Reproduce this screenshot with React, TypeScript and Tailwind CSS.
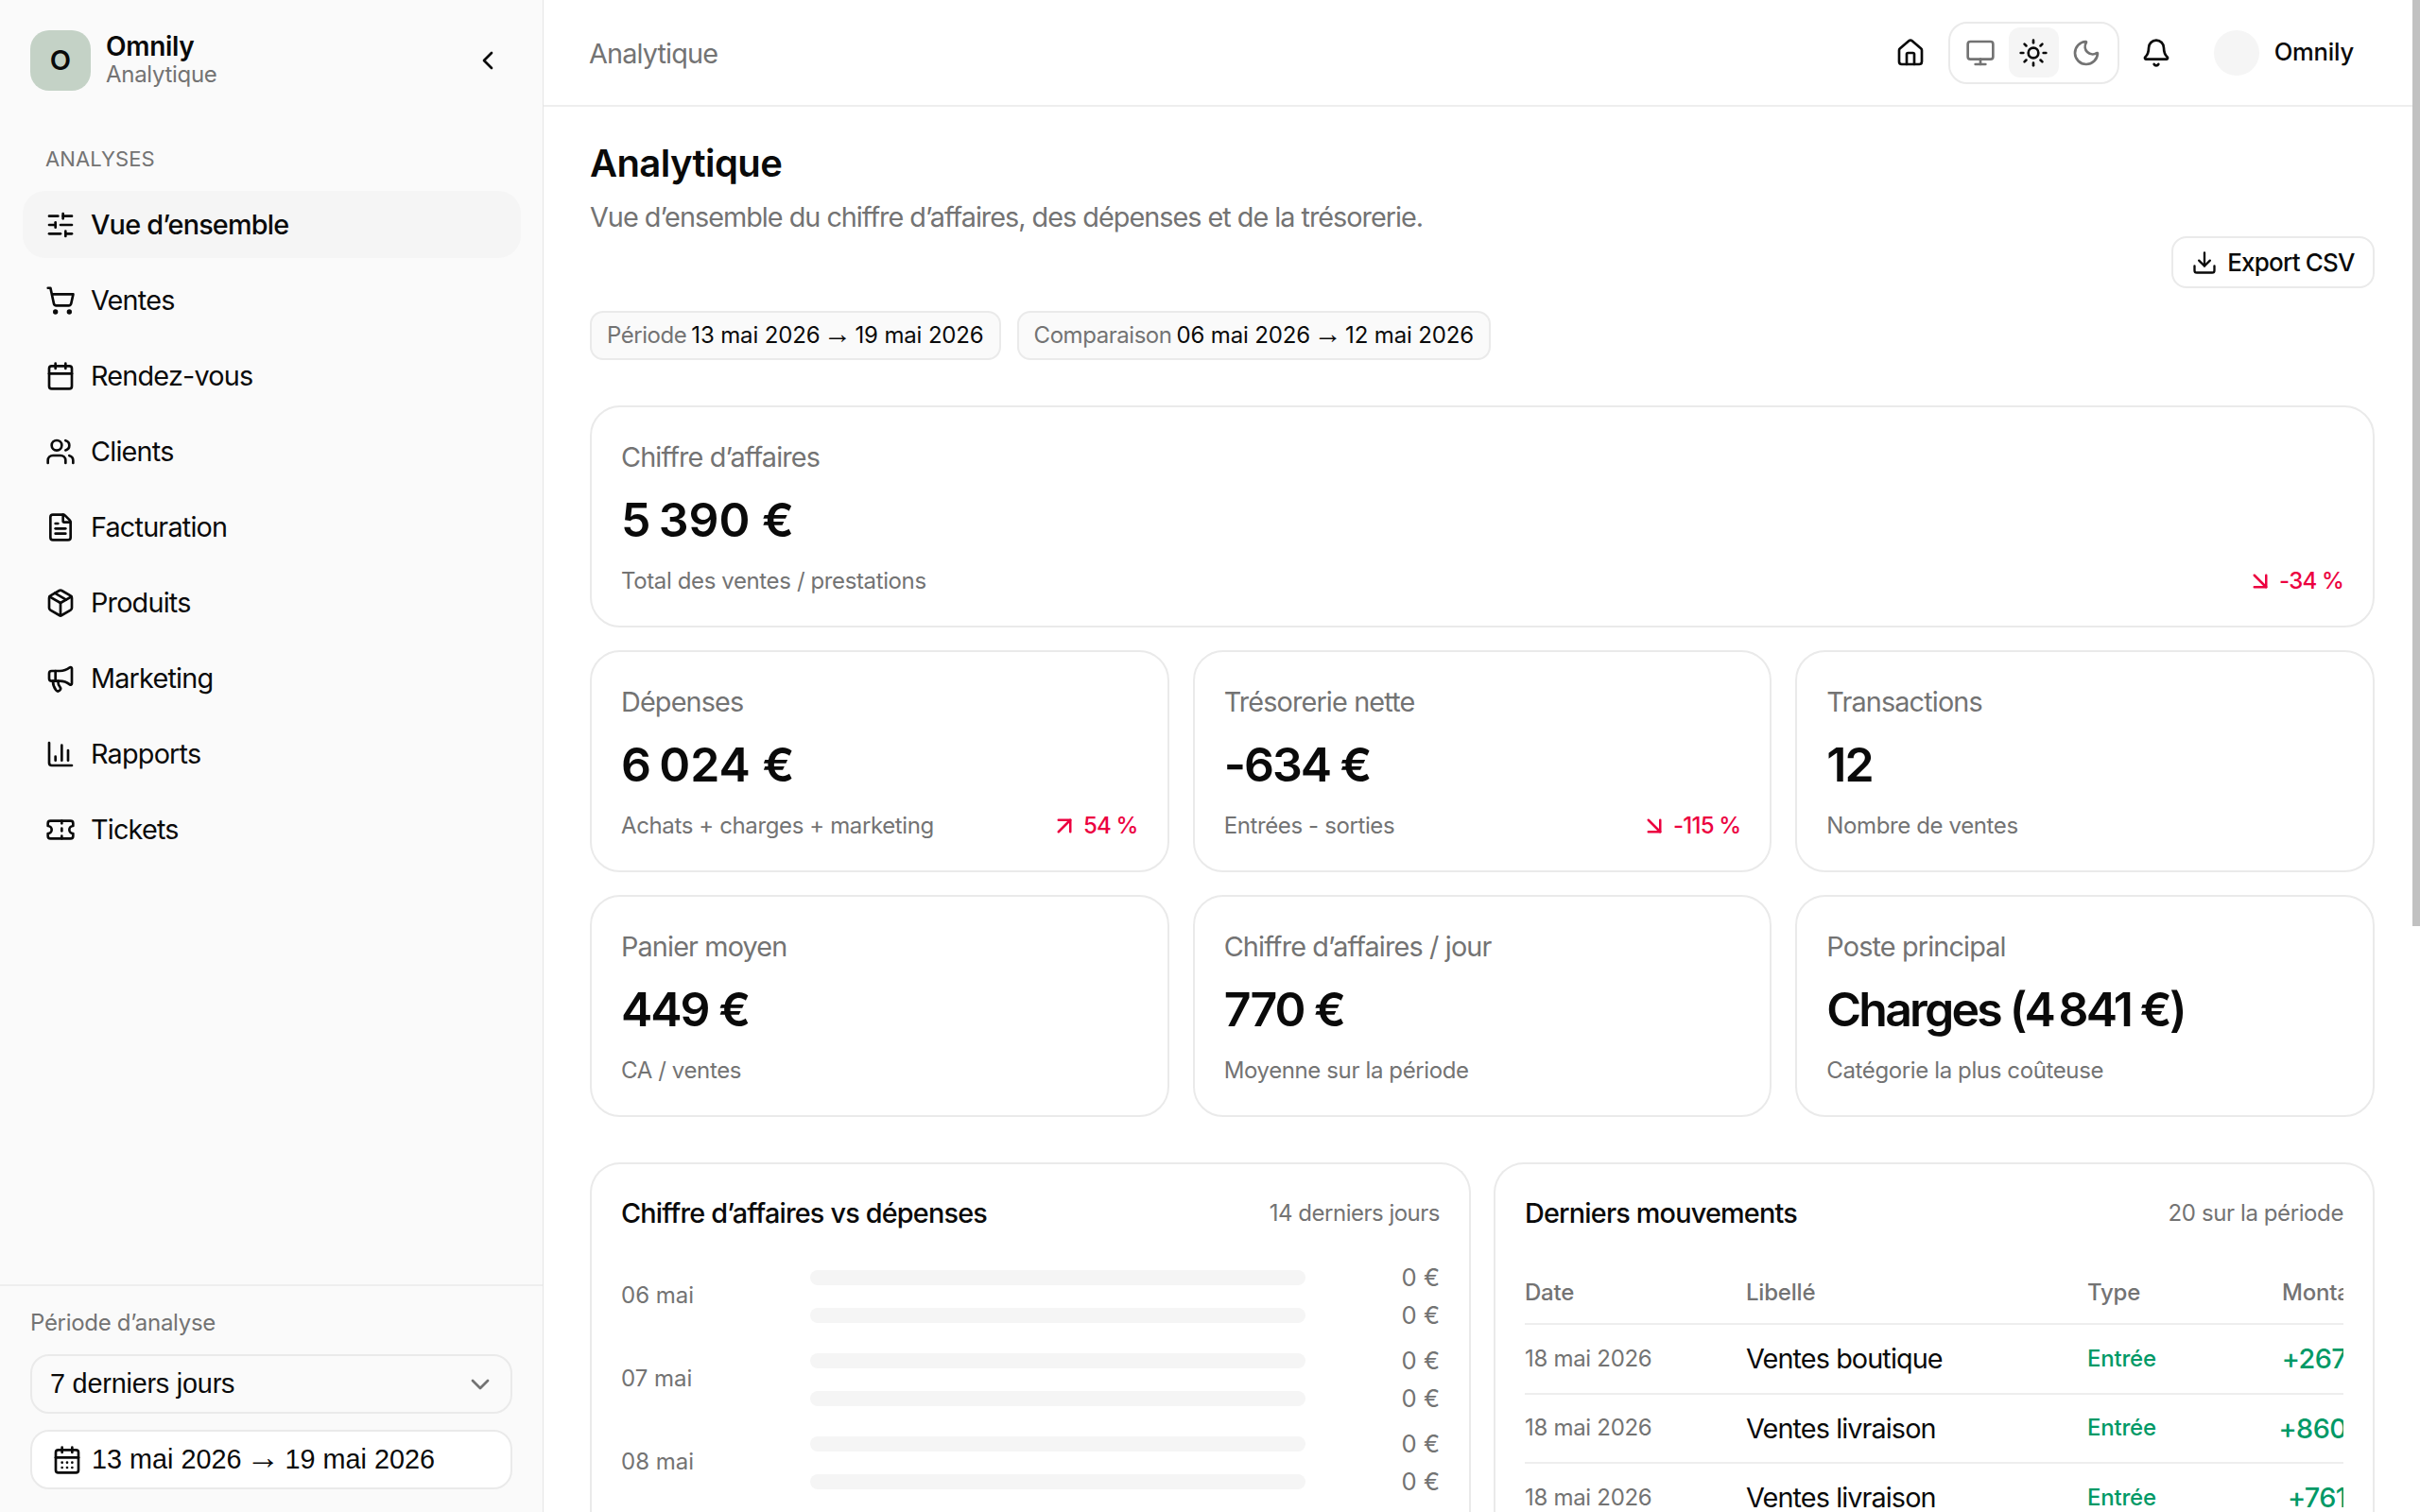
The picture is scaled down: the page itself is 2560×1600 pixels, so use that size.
import React from 'react';
import {
  ArrowDownRight,
  ArrowUpRight,
  Bell,
  Calendar,
  CalendarDays,
  ChartColumn,
  ChevronDown,
  ChevronLeft,
  Download,
  FileText,
  House,
  Megaphone,
  Monitor,
  Moon,
  Package,
  ShoppingCart,
  SlidersHorizontal,
  Sun,
  Ticket,
  Users,
} from 'lucide-react';

const navItems = [
  { label: 'Vue d’ensemble', icon: SlidersHorizontal, active: true },
  { label: 'Ventes', icon: ShoppingCart },
  { label: 'Rendez-vous', icon: Calendar },
  { label: 'Clients', icon: Users },
  { label: 'Facturation', icon: FileText },
  { label: 'Produits', icon: Package },
  { label: 'Marketing', icon: Megaphone },
  { label: 'Rapports', icon: ChartColumn },
  { label: 'Tickets', icon: Ticket },
];

const days = ['06', '07', '08'];

const movements = [
  { date: '18 mai 2026', label: 'Ventes boutique', amount: '+267 €' },
  { date: '18 mai 2026', label: 'Ventes livraison', amount: '+860 €' },
  { date: '18 mai 2026', label: 'Ventes livraison', amount: '+761 €' },
];

function Sidebar() {
  return (
    <aside className="flex h-screen w-[575px] shrink-0 flex-col border-r border-[#e5e5e5] bg-[#fafafa]">
      <div className="flex items-center justify-between pl-8 pr-[42px] pt-8">
        <div className="flex items-center gap-4">
          <div className="flex h-16 w-16 items-center justify-center rounded-[20px] bg-[#c4d2c6] text-[29px] font-semibold text-[#0a0a0a]">
            O
          </div>
          <div className="-mt-[3px] flex flex-col">
            <span className="text-[28px] leading-[32px] font-semibold tracking-[-0.3px] text-[#0a0a0a]">Omnily</span>
            <span className="text-[24px] leading-[28px] tracking-[-0.3px] text-[#737373]">Analytique</span>
          </div>
        </div>
        <ChevronLeft className="h-8 w-8 text-[#0a0a0a]" />
      </div>
      <div className="pl-[48px] pt-[54px] text-[22px] leading-[36px] tracking-[0.1px] text-[#737373]">ANALYSES</div>
      <nav className="mt-4 flex flex-col gap-[9px] pl-6 pr-[23px]">
        {navItems.map((item) => (
          <a
            key={item.label}
            className={`flex h-[71px] items-center gap-[16px] rounded-[24px] pl-6 text-[28.8px] tracking-[-0.8px] text-[#0a0a0a] ${item.active ? 'bg-[#f5f5f5] font-medium' : ''}`}
          >
            <item.icon className="h-8 w-8" />
            {item.label}
          </a>
        ))}
      </nav>
      <div className="mt-auto flex h-[241px] flex-col border-t-2 border-[#eeeeee] px-8 pt-[23px]">
        <span className="text-[24px] leading-[32px] tracking-[-0.3px] text-[#737373]">Période d’analyse</span>
        <div className="mt-[17px] flex h-[63px] w-[510px] items-center justify-between rounded-[20px] border-2 border-[#eaeaea] pl-[19px] pr-[16px] font-['Liberation_Sans',sans-serif] text-[28.8px] tracking-[-0.2px] text-[#0a0a0a]">
          7 derniers jours
          <ChevronDown className="h-8 w-8 text-[#737373]" />
        </div>
        <div className="mt-[17px] flex h-[63px] w-[510px] items-center gap-[10px] rounded-[20px] border-2 border-[#eaeaea] bg-white pl-[21px] font-['Liberation_Sans',sans-serif] text-[28.8px] text-[#0a0a0a]">
          <CalendarDays className="h-8 w-8" />
          <span>
            13 mai 2026 <span className="-mx-[3px] text-[36px] leading-none">→</span> 19 mai 2026
          </span>
        </div>
      </div>
    </aside>
  );
}

function Topbar() {
  return (
    <header className="flex h-[113px] items-center justify-between border-b-2 border-[#eeeeee] bg-white pl-[48px] pr-[62px]">
      <span className="pt-[3px] text-[28.8px] tracking-[-0.85px] text-[#737373]">Analytique</span>
      <div className="flex items-center">
        <House className="h-8 w-8 text-[#0a0a0a]" />
        <div className="ml-[24px] flex h-[66px] w-[181px] items-center justify-center gap-[3px] rounded-[20px] border-2 border-[#eaeaea]">
          <span className="flex h-[53px] w-[53px] items-center justify-center text-[#737373]"><Monitor className="h-8 w-8" /></span>
          <span className="flex h-[53px] w-[53px] items-center justify-center rounded-[12px] bg-[#f5f5f5] text-[#0a0a0a]"><Sun className="h-8 w-8" /></span>
          <span className="flex h-[53px] w-[53px] items-center justify-center text-[#737373]"><Moon className="h-8 w-8" /></span>
        </div>
        <Bell className="ml-[23px] h-8 w-8 text-[#0a0a0a]" />
        <div className="ml-[45px] h-12 w-12 rounded-full bg-[#f5f5f5]" />
        <span className="ml-[16px] text-[25.6px] font-medium tracking-[-0.2px] text-[#0a0a0a]">Omnily</span>
      </div>
    </header>
  );
}

function Chip({ label, from, to }: { label: string; from: string; to: string }) {
  return (
    <div className="flex h-[52px] items-center gap-[5px] rounded-[14px] border-2 border-[#eaeaea] bg-[#fafafa] px-[16px] text-[24px] tracking-[-0.15px]">
      <span className="tracking-[-0.45px] text-[#737373]">{label}</span>
      <span className="text-[#0a0a0a]">
        {from} <span className="-mx-[3px] font-['Liberation_Sans',sans-serif] text-[30px] leading-none">→</span> {to}
      </span>
    </div>
  );
}

function StatCard({ label, value, sub, trend, up, tight }: { label: string; value: string; sub: string; trend?: string; up?: boolean; tight?: boolean }) {
  const Arrow = up ? ArrowUpRight : ArrowDownRight;
  return (
    <div className="flex h-[235px] flex-col rounded-[32px] border-2 border-[#eaeaea] bg-white px-[31px] pt-[33px]">
      <span className="text-[28.8px] leading-[40px] tracking-[-0.85px] text-[#737373]">{label}</span>
      <span className={`mt-[14px] text-[50px] leading-[64px] font-semibold text-[#0a0a0a] ${tight ? 'tracking-[-2.8px]' : 'tracking-[-2px]'}`}>{value}</span>
      <div className="mt-[15px] flex items-center justify-between">
        <span className="text-[24px] leading-[36px] tracking-[-0.38px] text-[#737373]">{sub}</span>
        {trend && (
          <span className="flex items-center gap-[5px] text-[24px] font-medium tracking-[-0.8px] text-rose-600">
            <Arrow className="h-[30px] w-[30px]" />
            {trend}
          </span>
        )}
      </div>
    </div>
  );
}

function ChartCard() {
  return (
    <div className="rounded-t-[32px] border-2 border-b-0 border-[#eaeaea] bg-white px-[31px] pb-[32px] pt-[30px]">
      <div className="flex h-[44px] items-center justify-between">
        <span className="text-[28.8px] font-medium tracking-[-0.8px] text-[#0a0a0a]">Chiffre d’affaires vs dépenses</span>
        <span className="text-[24px] tracking-[-0.5px] text-[#737373]">14 derniers jours</span>
      </div>
      <div className="mt-[26px] flex flex-col gap-2">
        {days.map((day) => (
          <div key={day} className="flex items-center">
            <span className="w-[200px] pb-[2px] text-[24px] text-[#737373]">{day} mai</span>
            <div className="flex flex-1 flex-col">
              <div className="flex h-10 items-center"><div className="h-4 w-full rounded-lg bg-[#f5f5f5]" /></div>
              <div className="flex h-10 items-center"><div className="h-4 w-full rounded-lg bg-[#f5f5f5]" /></div>
            </div>
            <div className="flex w-[142px] flex-col text-right text-[25.6px] leading-[40px] text-[#737373]">
              <span>0 €</span>
              <span>0 €</span>
            </div>
          </div>
        ))}
      </div>
    </div>
  );
}

function MovementsCard() {
  return (
    <div className="rounded-t-[32px] border-2 border-b-0 border-[#eaeaea] bg-white px-[31px] pb-[32px] pt-[30px]">
      <div className="flex h-[44px] items-center justify-between">
        <span className="text-[28.8px] font-medium tracking-[-0.8px] text-[#0a0a0a]">Derniers mouvements</span>
        <span className="text-[24px] tracking-[-0.4px] text-[#737373]">20 sur la période</span>
      </div>
      <div className="mt-[29px] overflow-hidden">
        <table className="w-[895px] table-fixed border-collapse">
          <thead>
            <tr className="h-[66px] border-b-2 border-[#eeeeee] text-left text-[24px] font-medium tracking-[-0.2px] text-[#737373]">
              <th className="w-[234px] font-medium">Date</th>
              <th className="w-[361px] font-medium">Libellé</th>
              <th className="w-[195px] font-medium">Type</th>
              <th className="w-[105px] text-right font-medium">Montant</th>
            </tr>
          </thead>
          <tbody>
            {movements.map((row, i) => (
              <tr key={i} className="h-[73.5px] border-b-2 border-[#eeeeee]">
                <td className="text-[24px] tracking-[-0.3px] text-[#737373]">{row.date}</td>
                <td className="text-[28.8px] tracking-[-0.9px] text-[#0a0a0a]">{row.label}</td>
                <td className="text-[24px] font-medium tracking-[-0.2px] text-emerald-600">Entrée</td>
                <td className="whitespace-nowrap text-right text-[28.8px] font-medium tracking-[-0.6px] text-emerald-600">{row.amount}</td>
              </tr>
            ))}
          </tbody>
        </table>
      </div>
    </div>
  );
}

export default function App() {
  return (
    <div className="flex h-screen overflow-hidden bg-white font-['Inter',sans-serif]">
      <Sidebar />
      <main className="h-screen min-w-0 flex-1 overflow-hidden">
        <Topbar />
        <div className="pb-[32px] pl-[49px] pr-[40px] pt-[36px]">
          <h1 className="text-[40px] leading-[48px] font-semibold tracking-[-0.6px] text-[#0a0a0a]">Analytique</h1>
          <p className="mt-[13px] text-[28.8px] leading-[40px] tracking-[-1px] text-[#737373]">
            Vue d’ensemble du chiffre d’affaires, des dépenses et de la trésorerie.
          </p>
          <div className="flex justify-end">
            <button className="flex h-[55px] w-[215px] items-center justify-center gap-[10px] rounded-[16px] border-2 border-[#eaeaea] text-[26px] font-medium tracking-[-0.8px] text-[#0a0a0a]">
              <Download className="h-7 w-7" />
              Export CSV
            </button>
          </div>
          <div className="mt-[24px] flex gap-[17px]">
            <Chip label="Période" from="13 mai 2026" to="19 mai 2026" />
            <Chip label="Comparaison" from="06 mai 2026" to="12 mai 2026" />
          </div>
          <div className="mt-[48px] flex flex-col gap-[24px]">
            <StatCard label="Chiffre d’affaires" value={'5\u202f390 €'} sub="Total des ventes / prestations" trend="-34 %" />
            <div className="grid grid-cols-3 gap-x-[25px] gap-y-[24px]">
              <StatCard label="Dépenses" value={'6\u202f024 €'} sub="Achats + charges + marketing" trend="54 %" up />
              <StatCard label="Trésorerie nette" value="-634 €" sub="Entrées - sorties" trend="-115 %" />
              <StatCard label="Transactions" value="12" sub="Nombre de ventes" />
              <StatCard label="Panier moyen" value="449 €" sub="CA / ventes" />
              <StatCard label="Chiffre d’affaires / jour" value="770 €" sub="Moyenne sur la période" />
              <StatCard label="Poste principal" value={'Charges (4\u202f841 €)'} sub="Catégorie la plus coûteuse" tight />
            </div>
          </div>
          <div className="mt-[48px] grid grid-cols-2 items-start gap-[24px]">
            <ChartCard />
            <MovementsCard />
          </div>
        </div>
      </main>
      {/* scrollbar of the content pane */}
      <div className="h-screen w-2 shrink-0 bg-white">
        <div className="h-[980px] w-2 bg-[#c1c1c1]" />
      </div>
    </div>
  );
}
